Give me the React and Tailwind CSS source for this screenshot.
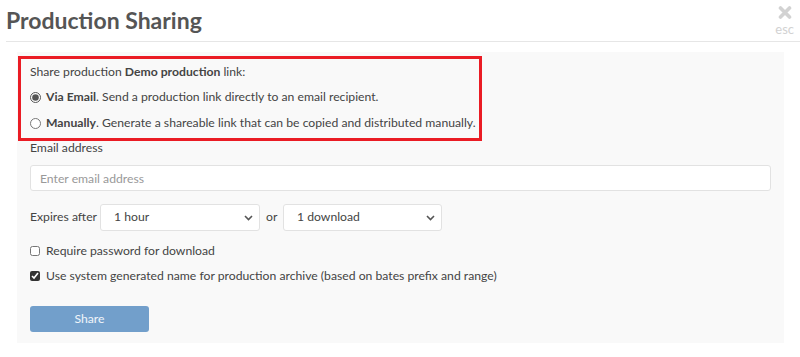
import { useState } from 'react'

const FONT = "font-['Lato','Noto_Sans',sans-serif]"

function Chevron() {
  return (
    <svg width="9" height="6" viewBox="0 0 9 6" className="pointer-events-none absolute right-[7px] top-[11px]">
      <path d="M1 1l3.5 3.5L8 1" fill="none" stroke="#555" strokeWidth="1.6" />
    </svg>
  )
}

function Select({ value, options, className }) {
  const [v, setV] = useState(value)
  return (
    <div className={`relative ${className}`}>
      <select
        value={v}
        onChange={(e) => setV(e.target.value)}
        className="h-full w-full appearance-none rounded-[3px] border border-[#e2e2e2] bg-white pl-[13px] text-[12.2px] text-[#444] outline-none"
      >
        {options.map((o) => (
          <option key={o}>{o}</option>
        ))}
      </select>
      <Chevron />
    </div>
  )
}

export default function App() {
  const [mode, setMode] = useState('email')
  const [password, setPassword] = useState(false)
  const [sysName, setSysName] = useState(true)

  return (
    <div className={`relative h-[357px] w-[800px] overflow-hidden bg-white ${FONT} text-[12.2px] text-[#444]`}>
      {/* header */}
      <div className="ml-[6px] flex h-[42px] justify-between border-b border-[#e6e6e6]">
        <h1 className="mt-[4px] text-[23px] font-bold leading-[32px] text-[#555]">Production Sharing</h1>
        <div className="mr-[6px] mt-[6px] flex flex-col items-center">
          <svg width="14" height="13" viewBox="0 0 14 13">
            <path d="M2.5 2l9 9M11.5 2l-9 9" stroke="#d2d2d2" strokeWidth="3.6" strokeLinecap="round" />
          </svg>
          <span className="mt-[3px] text-[13px] leading-[14px] text-[#d2d2d2]">esc</span>
        </div>
      </div>

      {/* panel */}
      <div className="ml-[17px] mt-[10px] h-[291px] w-[767px] bg-[#f9f9f9] px-[13px] pt-[11px]">
        <p className="h-[18px] leading-[18px]">
          Share production <b className="font-bold">Demo production</b> link:
        </p>

        <label className="mt-[7px] flex h-[18px] cursor-pointer items-center gap-[5px] leading-[18px]">
          <input
            type="radio"
            checked={mode === 'email'}
            onChange={() => setMode('email')}
            className="m-0 h-[11px] w-[11px] accent-[#555]"
          />
          <span>
            <b className="font-bold">Via Email</b>. Send a production link directly to an email recipient.
          </span>
        </label>

        <label className="mt-[8px] flex h-[18px] cursor-pointer items-center gap-[5px] leading-[18px]">
          <input
            type="radio"
            checked={mode === 'manual'}
            onChange={() => setMode('manual')}
            className="m-0 h-[11px] w-[11px] accent-[#555]"
          />
          <span>
            <b className="font-bold">Manually</b>. Generate a shareable link that can be copied and distributed manually.
          </span>
        </label>

        <p className="mt-[7px] h-[18px] leading-[18px]">Email address</p>

        <input
          type="text"
          placeholder="Enter email address"
          className="mt-[8px] block h-[26px] w-[741px] rounded-[3px] border border-[#e2e2e2] bg-white px-[9px] text-[12.2px] text-[#444] outline-none placeholder:text-[#999]"
        />

        <div className="mt-[13px] flex h-[27px] items-center">
          <span className="w-[70px] whitespace-nowrap">Expires after</span>
          <Select value="1 hour" options={['1 hour', '1 day', '1 week']} className="h-[27px] w-[160px]" />
          <span className="ml-[6px] w-[17px]">or</span>
          <Select value="1 download" options={['1 download', 'Unlimited']} className="h-[27px] w-[159px]" />
        </div>

        <label className="mt-[11px] flex h-[18px] cursor-pointer items-center gap-[6px] leading-[18px]">
          <input
            type="checkbox"
            checked={password}
            onChange={(e) => setPassword(e.target.checked)}
            className="m-0 h-[10px] w-[10px] accent-[#333]"
          />
          <span>Require password for download</span>
        </label>

        <label className="mt-[7px] flex h-[18px] cursor-pointer items-center gap-[6px] leading-[18px]">
          <input
            type="checkbox"
            checked={sysName}
            onChange={(e) => setSysName(e.target.checked)}
            className="m-0 h-[10px] w-[10px] accent-[#333]"
          />
          <span>Use system generated name for production archive (based on bates prefix and range)</span>
        </label>

        <button className="mt-[21px] h-[26px] w-[119px] rounded-[3px] bg-[#729fcb] text-[12.2px] text-white/90">
          Share
        </button>
      </div>

      {/* annotation box */}
      <div className="pointer-events-none absolute left-[18px] top-[56px] h-[85px] w-[464px] border-[3px] border-[#ea1c24]" />
    </div>
  )
}
